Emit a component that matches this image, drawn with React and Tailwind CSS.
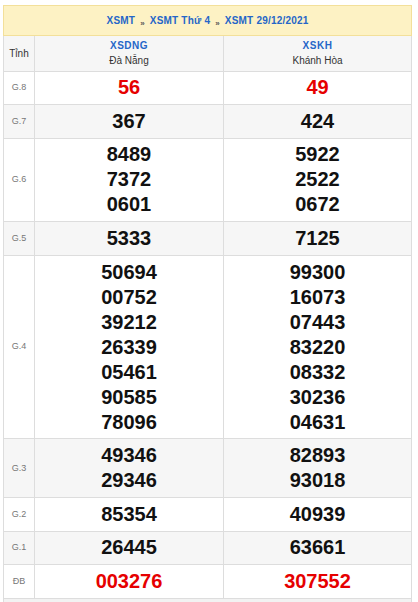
import React from "react";

const rows = [
  { label: "G.8", a: ["56"], b: ["49"], red: true },
  { label: "G.7", a: ["367"], b: ["424"] },
  { label: "G.6", a: ["8489", "7372", "0601"], b: ["5922", "2522", "0672"] },
  { label: "G.5", a: ["5333"], b: ["7125"] },
  {
    label: "G.4",
    a: ["50694", "00752", "39212", "26339", "05461", "90585", "78096"],
    b: ["99300", "16073", "07443", "83220", "08332", "30236", "04631"],
  },
  { label: "G.3", a: ["49346", "29346"], b: ["82893", "93018"] },
  { label: "G.2", a: ["85354"], b: ["40939"] },
  { label: "G.1", a: ["26445"], b: ["63661"] },
  { label: "ĐB", a: ["003276"], b: ["307552"], red: true },
];

const Nums = ({ list, red }) => (
  <td
    className={
      red
        ? "border border-[#dddddd] py-[3.8px] text-center text-[20px] leading-[25px] font-bold text-[#e60000]"
        : "border border-[#dddddd] py-[3.8px] text-center text-[20px] leading-[25px] font-bold text-[#111111]"
    }
  >
    {list.map((n) => (
      <div key={n}>{n}</div>
    ))}
  </td>
);

export default function App() {
  return (
    <div
      className="bg-white min-h-[602px] pt-[5px] pl-[3px]"
      style={{ fontFamily: '"Liberation Sans", Arial, sans-serif' }}
    >
      <div className="w-[409px]">
        <div className="h-[31px] bg-[#fdf2c4] border border-[#f3e09a] flex items-center justify-center text-[10px] font-bold text-[#2566c8] tracking-[0.2px]">
          <span>XSMT</span>
          <span className="mx-[5px] text-[8px] text-[#555] relative top-[3px]">»</span>
          <span>XSMT Thứ 4</span>
          <span className="mx-[5px] text-[8px] text-[#555] relative top-[3px]">»</span>
          <span>XSMT 29/12/2021</span>
        </div>
        <table className="w-full border-collapse table-fixed">
          <colgroup>
            <col className="w-[31px]" />
            <col className="w-[189px]" />
            <col />
          </colgroup>
          <tbody>
            <tr className="bg-[#f6f6f6] h-[35px]">
              <td className="border border-t-0 border-[#dddddd] text-center text-[10px] text-[#333]">
                Tỉnh
              </td>
              <td className="border border-t-0 border-[#dddddd] text-center text-[10px] leading-[15px]">
                <div className="font-bold text-[#2566c8] tracking-[0.5px]">XSDNG</div>
                <div className="text-[#333]">Đà Nẵng</div>
              </td>
              <td className="border border-t-0 border-[#dddddd] text-center text-[10px] leading-[15px]">
                <div className="font-bold text-[#2566c8] tracking-[0.5px]">XSKH</div>
                <div className="text-[#333]">Khánh Hòa</div>
              </td>
            </tr>
            {rows.map((r, i) => (
              <tr key={r.label} className={i % 2 === 1 ? "bg-[#f6f6f6]" : "bg-white"}>
                <td className="border border-[#dddddd] text-center text-[9px] text-[#777]">
                  {r.label}
                </td>
                <Nums list={r.a} red={r.red} />
                <Nums list={r.b} red={r.red} />
              </tr>
            ))}
          </tbody>
        </table>
        <div className="h-[8px] bg-[#f2f2f2] border-x border-[#dddddd]"></div>
      </div>
    </div>
  );
}
